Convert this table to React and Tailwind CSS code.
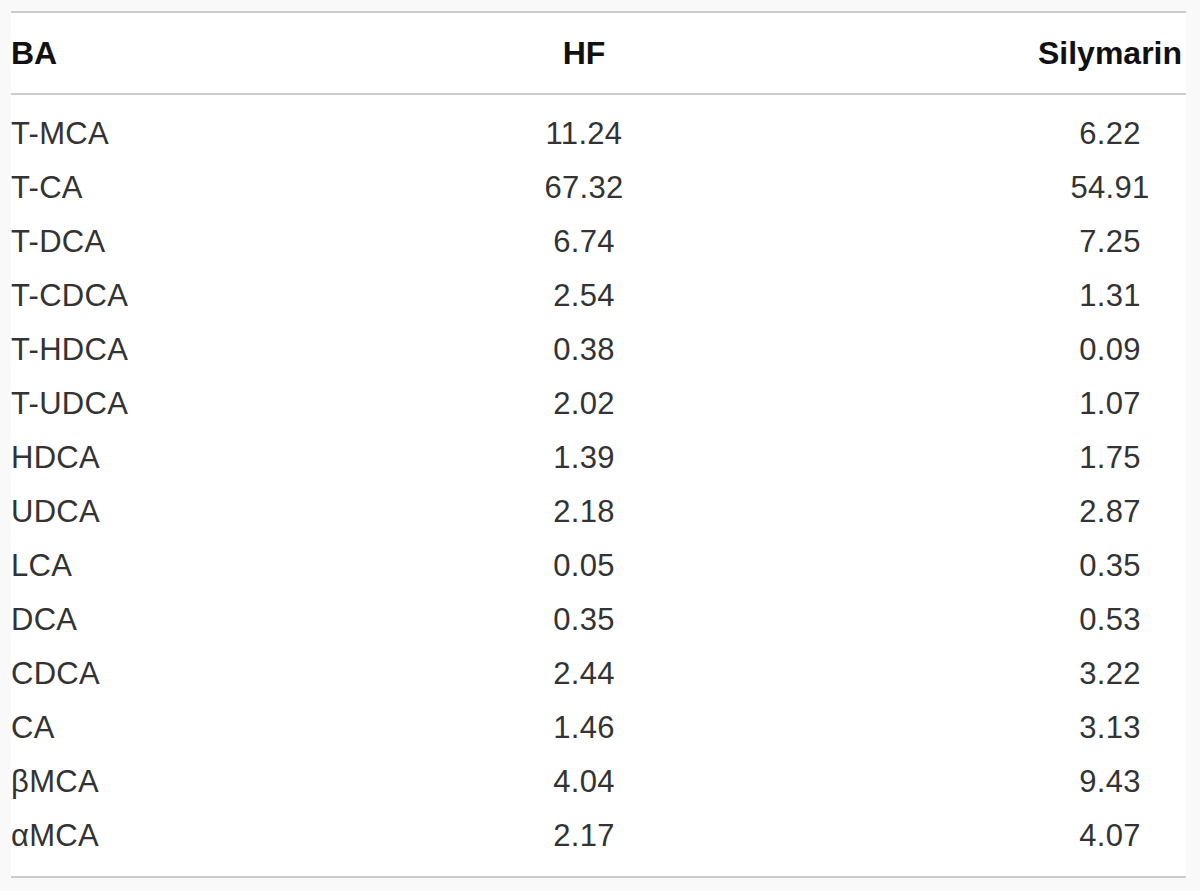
const rows = [
  ["T-MCA", "11.24", "6.22"],
  ["T-CA", "67.32", "54.91"],
  ["T-DCA", "6.74", "7.25"],
  ["T-CDCA", "2.54", "1.31"],
  ["T-HDCA", "0.38", "0.09"],
  ["T-UDCA", "2.02", "1.07"],
  ["HDCA", "1.39", "1.75"],
  ["UDCA", "2.18", "2.87"],
  ["LCA", "0.05", "0.35"],
  ["DCA", "0.35", "0.53"],
  ["CDCA", "2.44", "3.22"],
  ["CA", "1.46", "3.13"],
  ["βMCA", "4.04", "9.43"],
  ["αMCA", "2.17", "4.07"],
];

const Row = ({ cells, head }) => (
  <div
    className={
      "grid grid-cols-[473px_200px_1fr] items-center " +
      (head
        ? "h-[80px] font-bold text-[32px] text-[#111]"
        : "h-[54px] text-[31px] text-[#333] tracking-[0.3px]")
    }
  >
    <div>{cells[0]}</div>
    <div className="text-center">{cells[1]}</div>
    <div className="flex justify-end">
      <span className="w-[152px] text-center">{cells[2]}</span>
    </div>
  </div>
);

export default function App() {
  return (
    <div className="w-[1200px] h-[891px] bg-[#f9f9f9] pl-[11px] pr-[14px] pt-[11px] font-['Liberation_Sans',Arial,sans-serif]">
      <div className="bg-white border-t-2 border-b-2 border-[#cccccc]">
        {/* Header */}
        <div className="border-b-2 border-[#cccccc]">
          <Row head cells={["BA", "HF", "Silymarin"]} />
        </div>

        {/* Body rows */}
        <div className="pt-[12px] pb-[13px]">
          {rows.map((r) => (
            <Row key={r[0]} cells={r} />
          ))}
        </div>
      </div>
    </div>
  );
}
